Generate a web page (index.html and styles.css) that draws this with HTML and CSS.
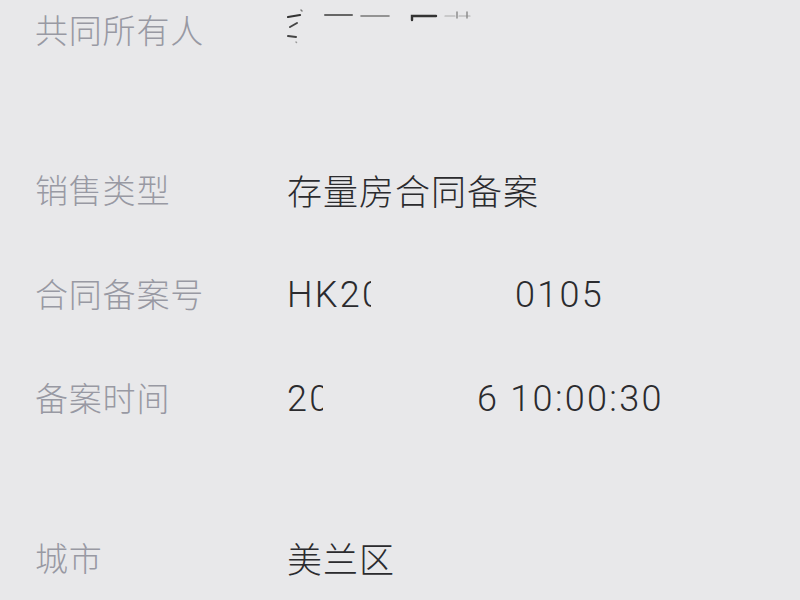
FILE: index.html
```html
<!DOCTYPE html>
<html lang="zh">
<head>
<meta charset="utf-8">
<link rel="stylesheet" href="styles.css">
</head>
<body>
<div class="sheet">
  <section class="group">
    <div class="row">
      <div class="label">共同所有人</div>
      <div class="value">
        <svg class="redact" width="200" height="44" viewBox="0 0 200 44" aria-hidden="true">
          <g stroke-linecap="round" fill="none">
            <path d="M1 10 L13 8" stroke="#333" stroke-width="2.2"/>
            <path d="M14 3 L15 4" stroke="#777" stroke-width="1.5"/>
            <path d="M3 20 L10 16" stroke="#444" stroke-width="2"/>
            <path d="M1 29 L9 30" stroke="#444" stroke-width="2"/>
            <path d="M9 35 L9.5 35.5" stroke="#999" stroke-width="1.5"/>
            <path d="M38 8 L65 8" stroke="#666" stroke-width="2"/>
            <path d="M74 9 L102 9" stroke="#777" stroke-width="1.6"/>
            <path d="M125 13 L125 9 L149 9" stroke="#333" stroke-width="2.4"/>
            <path d="M158 9 L168 9 M172 9 L183 9" stroke="#aaa" stroke-width="1.2"/>
            <path d="M170 5 L170 11 M180 5 L180 11" stroke="#888" stroke-width="1.4"/>
          </g>
        </svg>
      </div>
    </div>
  </section>
  <section class="group">
    <div class="row">
      <div class="label">销售类型</div>
      <div class="value cjk">存量房合同备案</div>
    </div>
    <div class="row">
      <div class="label">合同备案号</div>
      <div class="value num"><span class="clip clip-hk">HK20</span><span class="gap gap-hk"></span><span>0105</span></div>
    </div>
    <div class="row">
      <div class="label">备案时间</div>
      <div class="value num"><span class="clip clip-20">20</span><span class="gap gap-20"></span><span>6 10:00:30</span></div>
    </div>
  </section>
  <section class="group">
    <div class="row">
      <div class="label">城市</div>
      <div class="value cjk">美兰区</div>
    </div>
  </section>
</div>
</body>
</html>
```
FILE: styles.css
```css
html, body {
  margin: 0;
  padding: 0;
  background: #e8e8ea;
}
body {
  width: 800px;
  height: 600px;
  overflow: hidden;
}
.sheet {
  margin-top: -23px;
  display: flex;
  flex-direction: column;
  gap: 56px;
}
.group {
  display: flex;
  flex-direction: column;
}
.row {
  height: 104px;
  display: flex;
  align-items: center;
}
.label {
  width: 252px;
  padding-left: 35px;
  flex: none;
  font-family: "Noto Sans CJK SC", sans-serif;
  font-size: 33px;
  font-weight: 300;
  color: #9899a3;
  letter-spacing: 0.8px;
}
.value {
  display: flex;
  align-items: center;
  color: #2b2b2e;
  white-space: nowrap;
}
.cjk {
  font-family: "Noto Sans CJK SC", sans-serif;
  font-size: 35px;
  font-weight: 300;
  letter-spacing: 1px;
}
.num {
  font-family: Roboto, "Noto Sans CJK SC", sans-serif;
  font-size: 36px;
  font-weight: 300;
  letter-spacing: 2.3px;
  padding-top: 4px;
}
.redact {
  display: block;
}
.clip {
  display: inline-block;
  overflow: hidden;
  white-space: nowrap;
}
.clip-hk { width: 84px; }
.clip-20 { width: 36px; }
.gap { display: inline-block; }
.gap-hk { width: 144px; }
.gap-20 { width: 154px; }
```
